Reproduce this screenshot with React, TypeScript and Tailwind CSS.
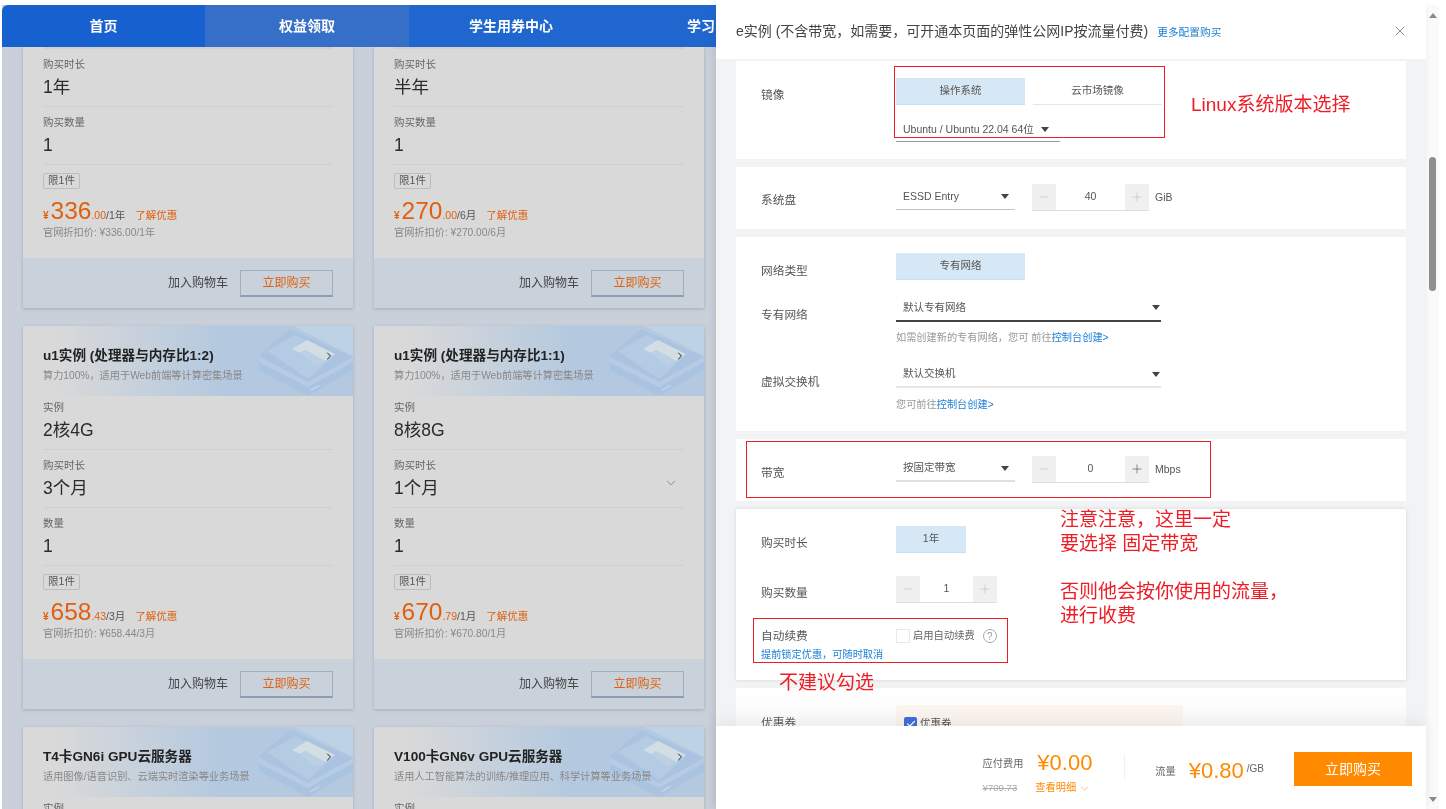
import { Check, ChevronDown, ChevronRight, Minus, Plus, X } from "lucide-react";
import type { ReactNode } from "react";

type Card = {
  title?: string;
  sub?: string;
  first?: [string, string];
  rows: [string, string, boolean?][];
  cur?: string;
  cents?: string;
  per?: string;
  list?: string;
};

const cards: Card[] = [
  { rows: [["购买时长", "1年"], ["购买数量", "1"]], cur: "336", cents: ".00", per: "/1年", list: "官网折扣价: ¥336.00/1年" },
  { rows: [["购买时长", "半年"], ["购买数量", "1"]], cur: "270", cents: ".00", per: "/6月", list: "官网折扣价: ¥270.00/6月" },
  {
    title: "u1实例 (处理器与内存比1:2)",
    sub: "算力100%，适用于Web前端等计算密集场景",
    first: ["实例", "2核4G"],
    rows: [["购买时长", "3个月"], ["数量", "1"]],
    cur: "658",
    cents: ".43",
    per: "/3月",
    list: "官网折扣价: ¥658.44/3月",
  },
  {
    title: "u1实例 (处理器与内存比1:1)",
    sub: "算力100%，适用于Web前端等计算密集场景",
    first: ["实例", "8核8G"],
    rows: [["购买时长", "1个月", true], ["数量", "1"]],
    cur: "670",
    cents: ".79",
    per: "/1月",
    list: "官网折扣价: ¥670.80/1月",
  },
  { title: "T4卡GN6i GPU云服务器", sub: "适用图像/语音识别、云端实时渲染等业务场景", first: ["实例", ""], rows: [] },
  { title: "V100卡GN6v GPU云服务器", sub: "适用人工智能算法的训练/推理应用、科学计算等业务场景", first: ["实例", ""], rows: [] },
];

function Chip() {
  return (
    <svg viewBox="0 0 94 70" className="absolute right-0 top-0 h-[70px] w-[94px]">
      <polygon points="34,0 94,0 94,30" fill="#bed2e5" />
      <polygon points="-1,30 31,3 94,31 94,44 49,70 -1,44" fill="#a9c3e1" />
      <polygon points="-1,30 49,56 94,31 94,36 49,61 -1,36" fill="#b6cce4" />
      <polygon points="8,25 36,9 76,29 49,53" fill="#b4cbe3" />
      <polygon points="33,23 48,14 76,28 66,35 46,24 41,27" fill="#d2dde4" />
      <polygon points="41,27 46,24 66,35 58,40" fill="#bcd0e3" />
      <polygon points="51,64 60,59 61,60 52,65" fill="#c6d6e6" />
    </svg>
  );
}

function Field({ label, value, first, caret }: { label: string; value: string; first?: boolean; caret?: boolean }) {
  return (
    <div className={`relative border-b border-[#cfcfcf] ${first ? "pt-[3px]" : "pt-[7px]"} pb-[6px]`}>
      <div className="h-4 text-[10.5px] leading-4 text-[#666]">{label}</div>
      <div className="mt-[2px] h-[26px] text-[17.5px] leading-[26px] text-[#2b2b2b]">{value}</div>
      {caret && <ChevronDown strokeWidth={1} className="absolute right-[6px] top-[26px] h-[14px] w-[14px] text-[#555]" />}
    </div>
  );
}

function ProductCard({ card }: { card: Card }) {
  return (
    <div className="bg-[#d9d9d9] shadow-[0_1px_3px_rgba(90,100,120,0.35)]">
      {card.title ? (
        <div className="relative h-[70px] overflow-hidden bg-linear-to-r from-[#d9d9d9] from-10% to-[#b4c9df] to-60% px-5 pt-[21px]">
          <Chip />
          <div className="relative flex items-center justify-between">
            <div className="h-[18px] text-[13.6px] font-bold leading-[18px] text-[#222]">{card.title}</div>
            <ChevronRight strokeWidth={2} className="mr-[-2px] h-3 w-3 text-[#222]" />
          </div>
          <div className="relative mt-[3px] h-4 text-[10.2px] leading-4 text-[#888]">{card.sub}</div>
        </div>
      ) : (
        <div className="mx-5 h-[2px] bg-[#cfcfcf]" />
      )}
      <div className="px-5">
        {card.first && <Field first label={card.first[0]} value={card.first[1]} />}
        {card.rows.map(([label, value, caret]) => (
          <Field key={label} label={label} value={value} caret={caret} />
        ))}
        {card.cur && (
          <>
            <div className="mt-2 flex h-4 w-[37px] items-center justify-center rounded-[2px] border border-[#bdbdbd] text-[10.5px] text-[#555]">
              限1件
            </div>
            <div className="mt-[9px] flex h-[26px] items-baseline text-[#e0600f]">
              <span className="text-[10px] font-bold">¥</span>
              <span className="ml-[2px] text-[24.5px] leading-[26px]">{card.cur}</span>
              <span className="text-[10.5px] text-[#e0600f]">{card.cents}</span>
              <span className="text-[10.5px] text-[#555]">{card.per}</span>
              <span className="ml-[10px] text-[10.5px]">了解优惠</span>
            </div>
            <div className="mt-[2px] h-[14px] text-[10.2px] leading-[14px] text-[#888]">{card.list}</div>
          </>
        )}
      </div>
      {card.cur && (
        <div className="mt-[18px] flex h-[50px] items-center justify-end gap-3 bg-[#c9d1da] pr-5">
          <span className="text-[12px] text-[#444]">加入购物车</span>
          <div className="flex h-[27px] w-[93px] items-center justify-center border border-b-2 border-[#a3adbb] border-b-[#8f9bb0] text-[12px] text-[#e0600f]">
            立即购买
          </div>
        </div>
      )}
    </div>
  );
}

function Caret() {
  return (
    <svg viewBox="0 0 8 5" className="h-[5px] w-2 shrink-0">
      <polygon points="0,0 8,0 4,5" fill="#444" />
    </svg>
  );
}

function Select({ text, w, line, h = "h-[26px]", pad = "pr-[6px]" }: { text: string; w: string; line: string; h?: string; pad?: string }) {
  return (
    <div className={`flex items-center justify-between pl-[7px] text-[10.5px] text-[#555] ${w} ${h} ${line} ${pad}`}>
      <span>{text}</span>
      <Caret />
    </div>
  );
}

function Stepper({ value, w, active }: { value: string; w: string; active?: boolean }) {
  return (
    <div className={`flex h-[27px] border-b border-[#dedede] ${w}`}>
      <div className="flex w-6 items-center justify-center bg-[#f0f0f0]">
        <Minus strokeWidth={1} className="h-[14px] w-[14px] text-[#bbb]" />
      </div>
      <div className="flex flex-1 items-center justify-center text-[10.5px] text-[#555]">{value}</div>
      <div className="flex w-6 items-center justify-center bg-[#f0f0f0]">
        <Plus strokeWidth={1} className={`h-[14px] w-[14px] ${active ? "text-[#444]" : "text-[#bbb]"}`} />
      </div>
    </div>
  );
}

function Tab({ text, w = "w-[129px]", on = true }: { text: string; w?: string; on?: boolean }) {
  return (
    <div
      className={`flex h-[27px] items-center justify-center border-b text-[10.5px] text-[#555] ${w} ${
        on ? "border-[#c5dff3] bg-[#d6e8f5]" : "border-[#e6e6e6] bg-white"
      }`}
    >
      {text}
    </div>
  );
}

function Label({ children, mt }: { children: ReactNode; mt: string }) {
  return <div className={`h-4 w-[135px] shrink-0 text-[11.7px] leading-4 text-[#555] ${mt}`}>{children}</div>;
}

function Section({ children, cls = "" }: { children: ReactNode; cls?: string }) {
  return <div className={`mb-2 w-[670px] bg-white pl-[25px] ${cls}`}>{children}</div>;
}

function Note({ children, cls }: { children: ReactNode; cls: string }) {
  return <div className={`absolute whitespace-nowrap text-[19px] leading-6 text-[#ee1c25] ${cls}`}>{children}</div>;
}

export default function App() {
  return (
    <div className="flex h-[809px] w-[1446px] overflow-hidden bg-white font-['Liberation_Sans','Noto_Sans_CJK_SC',sans-serif] blur-[0.3px]">
      <div className="w-[716px] shrink-0 pl-[2px] pt-[5px]">
        <div className="h-full overflow-hidden bg-[#c9d0da]">
          <div className="flex h-[42px] w-[815px] overflow-hidden rounded-tl-[6px] text-[14px] font-bold text-white">
            <div className="flex w-[203px] items-center justify-center bg-[#1660cf]">首页</div>
            <div className="flex w-[204px] items-center justify-center bg-[#366fc8]">权益领取</div>
            <div className="flex w-[204px] items-center justify-center bg-[#2066cf]">学生用券中心</div>
            <div className="flex w-[204px] items-center justify-center bg-[#2066cf]">学习中心</div>
          </div>
          <div className="grid grid-cols-[330px_330px] gap-x-[21px] gap-y-[18px] pl-[21px]">
            {cards.map((c, i) => (
              <ProductCard key={i} card={c} />
            ))}
          </div>
        </div>
      </div>

      <div className="relative flex w-[710px] shrink-0 flex-col shadow-[-2px_0_6px_rgba(60,70,90,0.12)]">
        <div className="flex h-[59px] shrink-0 items-center bg-white pl-5 pr-[18px] pt-[3px]">
          <span className="text-[14px] text-[#444]">e实例 (不含带宽，如需要，可开通本页面的弹性公网IP按流量付费)</span>
          <span className="ml-[9px] mt-[3px] text-[10.7px] text-[#1a7fd4]">更多配置购买</span>
          <X strokeWidth={1} className="ml-auto h-[16px] w-[16px] text-[#555]" />
        </div>

        <div className="relative h-[667px] shrink-0 overflow-hidden bg-[#f1f3f5] pl-5 pt-[2px]">
          <Section cls="h-[98px]">
            <div className="flex">
              <Label mt="mt-[26px]">镜像</Label>
              <div className="pt-[17px]">
                <div className="flex gap-2">
                  <Tab text="操作系统" />
                  <Tab text="云市场镜像" on={false} />
                </div>
                <Select text="Ubuntu / Ubuntu 22.04 64位" w="w-[164px]" line="border-b border-[#9a9aa5]" h="mt-[13px] h-[24px]" pad="pr-[11px]" />
              </div>
            </div>
          </Section>

          <Section cls="h-[62px]">
            <div className="flex">
              <Label mt="mt-[25px]">系统盘</Label>
              <div className="flex pt-[17px]">
                <Select text="ESSD Entry" w="w-[119px]" line="border-b border-[#c4c4c4]" />
                <Stepper value="40" w="ml-[17px] w-[117px]" />
                <span className="ml-[6px] mt-[6px] text-[10.5px] text-[#555]">GiB</span>
              </div>
            </div>
          </Section>

          <Section cls="h-[194px]">
            <div className="flex pt-4">
              <Label mt="mt-[10px]">网络类型</Label>
              <div className="h-[28px]">
                <Tab text="专有网络" />
              </div>
            </div>
            <div className="mt-[14px] flex">
              <Label mt="mt-[12px]">专有网络</Label>
              <div>
                <Select text="默认专有网络" w="w-[265px]" line="border-b-2 border-[#444]" h="h-[27px]" pad="pr-[1px]" />
                <div className="mt-[9px] h-[14px] text-[10.2px] leading-[14px] text-[#999]">
                  如需创建新的专有网络，您可 前往<span className="text-[#1a7fd4]">控制台创建&gt;</span>
                </div>
              </div>
            </div>
            <div className="mt-[17px] flex">
              <Label mt="mt-3">虚拟交换机</Label>
              <div>
                <Select text="默认交换机" w="w-[265px]" line="border-b-2 border-[#e6e6e6]" h="h-[26px]" pad="pr-[1px]" />
                <div className="mt-[10px] h-[14px] text-[10.2px] leading-[14px] text-[#999]">
                  您可前往<span className="text-[#1a7fd4]">控制台创建&gt;</span>
                </div>
              </div>
            </div>
          </Section>

          <Section cls="h-[62px]">
            <div className="flex">
              <Label mt="mt-[26px]">带宽</Label>
              <div className="flex pt-[17px]">
                <Select text="按固定带宽" w="w-[119px]" line="border-b-2 border-[#e0e0e0]" />
                <Stepper value="0" w="ml-[17px] w-[117px]" active />
                <span className="ml-[6px] mt-[6px] text-[10.5px] text-[#555]">Mbps</span>
              </div>
            </div>
          </Section>

          <Section cls="h-[171px] shadow-[0_0_4px_rgba(0,0,0,0.12)]">
            <div className="flex pt-[17px]">
              <Label mt="mt-[9px]">购买时长</Label>
              <div className="h-[28px]">
                <Tab text="1年" w="w-[70px]" />
              </div>
            </div>
            <div className="mt-[22px] flex">
              <Label mt="mt-[9px]">购买数量</Label>
              <Stepper value="1" w="w-[101px]" />
            </div>
            <div className="mt-[25px] flex">
              <Label mt="mt-0">自动续费</Label>
              <div className="flex h-4 items-center">
                <div className="h-[14px] w-[14px] border border-[#e8e8e8]" />
                <span className="ml-[3px] text-[10.3px] text-[#666]">启用自动续费</span>
                <span className="ml-[8px] flex h-[14px] w-[14px] items-center justify-center rounded-full border border-[#aaa] text-[10px] text-[#999]">
                  ?
                </span>
              </div>
            </div>
            <div className="mt-[4px] h-[14px] text-[10.2px] leading-[14px] text-[#1a7fd4]">提前锁定优惠，可随时取消</div>
          </Section>

          <Section cls="h-[60px] bg-linear-to-b from-white to-[#f4f5f6]">
            <div className="flex pt-[17px]">
              <Label mt="mt-[10px]">优惠券</Label>
              <div className="flex h-[40px] w-[287px] items-start rounded-t-[3px] bg-[#fbf3ee] pl-2 pt-3">
                <div className="flex h-[13px] w-[13px] items-center justify-center rounded-[2px] bg-[#3f6fdc]">
                  <Check strokeWidth={3} className="h-[10px] w-[10px] text-white" />
                </div>
                <span className="ml-[3px] text-[10.5px] leading-[13px] text-[#555]">优惠券</span>
              </div>
            </div>
          </Section>
        </div>

        <div className="relative z-10 flex h-[83px] shrink-0 items-start justify-end bg-white pr-[14px] pt-[26px] shadow-[0_-6px_14px_rgba(0,0,0,0.05)]">
          <div className="mr-[14px]">
            <div className="flex h-[24px] items-center text-[10.2px] text-[#666]">应付费用</div>
            <div className="mt-[5px] text-[9.6px] leading-[14px] text-[#aaa] line-through">¥709.73</div>
          </div>
          <div className="mr-[33px] w-[54px]">
            <div className="mt-[-2px] h-[26px] whitespace-nowrap text-[22px] leading-[26px] text-[#ff8a00]">¥0.00</div>
            <div className="mt-[5px] flex items-center whitespace-nowrap text-[10.2px] leading-[14px] text-[#ff8a00]">
              <span className="ml-[-2px]">查看明细</span>
              <ChevronDown strokeWidth={1} className="ml-[2px] h-[13px] w-[13px]" />
            </div>
          </div>
          <div className="mt-[3px] h-[25px] w-px bg-[#f0f0f0]" />
          <div className="ml-[30px] mt-[13px] text-[10.2px] leading-[14px] text-[#666]">流量</div>
          <div className="ml-[13px] mt-[6px] h-[26px] whitespace-nowrap text-[22px] leading-[26px] text-[#ff8a00]">¥0.80</div>
          <div className="ml-[3px] mt-[10px] text-[10px] leading-[14px] text-[#666]">/GB</div>
          <div className="ml-[30px] flex h-[34px] w-[118px] items-center justify-center bg-[#ff8a00] text-[14px] text-white">立即购买</div>
        </div>

        <div className="absolute left-[178px] top-[66px] h-[72px] w-[271px] border border-[#ee1c25]" />
        <Note cls="left-[475px] top-[93px]">Linux系统版本选择</Note>
        <div className="absolute left-[30px] top-[441px] h-[57px] w-[465px] border border-[#ee1c25]" />
        <Note cls="left-[344px] top-[508px]">注意注意，这里一定</Note>
        <Note cls="left-[344px] top-[532px]">要选择 固定带宽</Note>
        <Note cls="left-[344px] top-[580px]">否则他会按你使用的流量，</Note>
        <Note cls="left-[344px] top-[604px]">进行收费</Note>
        <div className="absolute left-[37px] top-[618px] h-[45px] w-[255px] border border-[#ee1c25]" />
        <Note cls="left-[63px] top-[671px]">不建议勾选</Note>
      </div>

      <div className="mt-[5px] flex w-[13px] shrink-0 flex-col items-center rounded-t-[4px] bg-[#fafafa]">
        <svg viewBox="0 0 8 5" className="mt-2 h-[5px] w-2">
          <polygon points="4,0 8,5 0,5" fill="#8a8a8a" />
        </svg>
        <div className="mt-[139px] h-[134px] w-[7px] rounded-full bg-[#8f8f8f]" />
        <svg viewBox="0 0 8 5" className="mt-auto mb-[7px] h-[5px] w-2">
          <polygon points="0,0 8,0 4,5" fill="#8a8a8a" />
        </svg>
      </div>
    </div>
  );
}
